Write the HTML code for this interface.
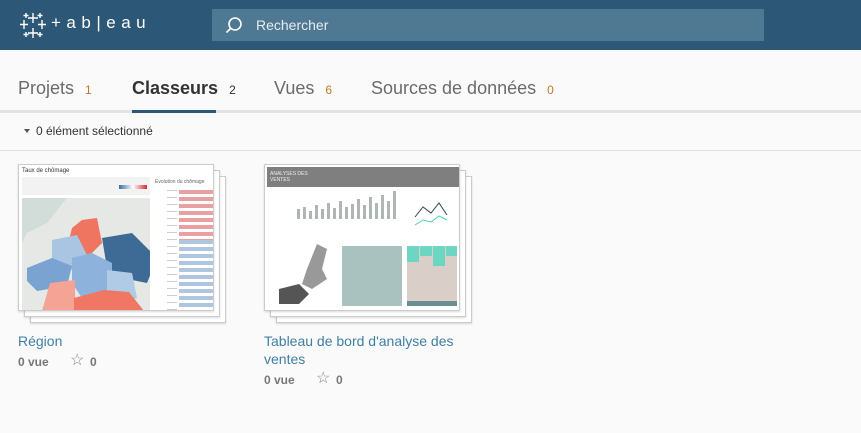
<!DOCTYPE html>
<html><head><meta charset="utf-8"><style>
*{margin:0;padding:0;box-sizing:border-box}
body{width:861px;height:433px;background:#fafafa;font-family:"Liberation Sans",sans-serif;position:relative;overflow:hidden}
.a{position:absolute}
.hdr{left:0;top:0;width:861px;height:50px;background:#2c5777}
.search{left:212px;top:9px;width:552px;height:32px;background:#4f7893}
.tab{top:78px;font-size:18px;color:#6b6b6b}
.cnt{font-size:12px;color:#c07a2e;margin-left:11px}
.card{background:#fff;border:1px solid #ccc;box-shadow:0 1px 2px rgba(0,0,0,.15)}
.title{font-size:14px;color:#3f7fa5;line-height:18px}
.meta{font-size:12px;color:#777;font-weight:bold}
</style></head><body>
<div class="a hdr"></div>
<svg class="a" style="left:18px;top:10px" width="30" height="30" viewBox="0 0 30 30" stroke="#fff" stroke-width="1.4" fill="none">
<path d="M15 3v10M10 8h10M15 18v10M10 23h10M6 10v9M2 14.5h8M24 10v9M20 14.5h8M8 3v5M5.5 5.5h5M22 3v5M19.5 5.5h5M8 22v5M5.5 24.5h5M22 22v5M19.5 24.5h5"/></svg>
<div class="a" style="left:51px;top:13px;color:#fff;font-size:17px;letter-spacing:5.5px">+ab|eau</div>
<div class="a search"></div>
<svg class="a" style="left:225px;top:16px" width="18" height="18" viewBox="0 0 18 18" fill="none" stroke="#fff" stroke-width="1.6"><circle cx="10" cy="8" r="6"/><path d="M6 12l-4.5 4.5"/></svg>
<div class="a" style="left:256px;top:17px;color:#e6edf2;font-size:14px">Rechercher</div>

<div class="a tab" style="left:18px">Projets<span class="cnt">1</span></div>
<div class="a tab" style="left:132px;color:#333;font-weight:bold">Classeurs<span class="cnt" style="color:#333;font-weight:normal">2</span></div>
<div class="a tab" style="left:274px">Vues<span class="cnt">6</span></div>
<div class="a tab" style="left:371px">Sources de données<span class="cnt">0</span></div>
<div class="a" style="left:0;top:110px;width:861px;height:3px;background:#e3e3e3"></div>
<div class="a" style="left:132px;top:110px;width:84px;height:3px;background:#2c5777"></div>
<div class="a" style="left:24px;top:129px;width:0;height:0;border-left:3px solid transparent;border-right:3px solid transparent;border-top:4px solid #555"></div>
<div class="a" style="left:36px;top:124px;font-size:12px;color:#333">0 élément sélectionné</div>
<div class="a" style="left:0;top:150px;width:861px;height:1px;background:#e3e3e3"></div>

<!-- card 1 -->
<div class="a card" style="left:30px;top:176px;width:196px;height:147px"></div>
<div class="a card" style="left:24px;top:170px;width:196px;height:147px"></div>
<div class="a card" style="left:18px;top:164px;width:196px;height:147px;overflow:hidden">
 <div class="a" style="left:3px;top:3px;font-size:6px;color:#333">Taux de chômage</div>
 <div class="a" style="left:3px;top:12px;width:128px;height:18px;background:#f2f2f2"></div>
 <div class="a" style="left:100px;top:20px;width:28px;height:4px;background:linear-gradient(90deg,#3a6ea5,#fff,#d1283a)"></div>
 <div class="a" style="left:3px;top:33px;width:128px;height:113px;background:#e6e8e6"></div>
 <svg class="a" style="left:3px;top:33px" width="128" height="113" viewBox="0 0 128 113">
  <path d="M0 0H45L25 25L5 35L0 45Z" fill="#d2ddd9"/>
  <path d="M60 22l15 -2 5 25 -15 15 -20 -10 5 -20z" fill="#f07560"/>
  <path d="M80 40l30 -5 25 25 -10 25 -25 -5 -15 -10z" fill="#3e6a96"/>
  <path d="M30 42l25 -5 10 20 -15 15 -20 -10z" fill="#a9c5e2"/>
  <path d="M5 70l25 -10 20 8 -5 20 -30 5 -10 -10z" fill="#7aa3d1"/>
  <path d="M50 60l20 -5 20 10 0 30 -30 5 -10 -15z" fill="#8db3dc"/>
  <path d="M85 72l25 3 5 25 -25 10 -5 -15z" fill="#b0cbe6"/>
  <path d="M28 85l25 -3 0 31 -33 0z" fill="#f4a394"/>
  <path d="M52 100l30 -8 25 2 15 19 -70 0z" fill="#ef7763"/>
 </svg>
 <div class="a" style="left:136px;top:14px;font-size:5px;color:#666">Évolution du chômage</div>
 <div class="a" style="left:148px;top:25px;width:10px;height:120px;background:repeating-linear-gradient(180deg,#ccc 0 1px,transparent 1px 7px)"></div>
 <div class="a" style="left:160px;top:25px;width:34px;height:50px;background:repeating-linear-gradient(180deg,#e8a0a0 0 4px,#fff 4px 7px)"></div>
 <div class="a" style="left:160px;top:75px;width:34px;height:70px;background:repeating-linear-gradient(180deg,#aec6df 0 4px,#fff 4px 7px)"></div>
</div>
<div class="a title" style="left:18px;top:332px">Région</div>
<div class="a meta" style="left:18px;top:355px">0 vue</div>
<div class="a" style="left:70px;top:350px;font-size:16px;color:#888">☆</div>
<div class="a meta" style="left:90px;top:355px">0</div>

<!-- card 2 -->
<div class="a card" style="left:276px;top:176px;width:196px;height:147px"></div>
<div class="a card" style="left:270px;top:170px;width:196px;height:147px"></div>
<div class="a card" style="left:264px;top:164px;width:196px;height:147px;overflow:hidden">
 <div class="a" style="left:2px;top:2px;width:192px;height:20px;background:#7f7f7f"></div>
 <div class="a" style="left:5px;top:6px;font-size:5px;color:#eee">ANALYSES DES<br>VENTES</div>
 <svg class="a" style="left:2px;top:24px" width="192" height="120" viewBox="0 0 192 120">
  <g fill="#b0b6b6"><rect x="30" y="20" width="3" height="10"/><rect x="36" y="18" width="3" height="12"/><rect x="42" y="22" width="3" height="8"/><rect x="48" y="16" width="3" height="14"/><rect x="54" y="20" width="3" height="10"/><rect x="60" y="14" width="3" height="16"/><rect x="66" y="19" width="3" height="11"/><rect x="72" y="12" width="3" height="18"/><rect x="78" y="18" width="3" height="12"/><rect x="84" y="15" width="3" height="15"/><rect x="90" y="10" width="3" height="20"/><rect x="96" y="16" width="3" height="14"/><rect x="102" y="8" width="3" height="22"/><rect x="108" y="14" width="3" height="16"/><rect x="114" y="6" width="3" height="24"/><rect x="120" y="12" width="3" height="18"/><rect x="126" y="2" width="3" height="28"/></g>
  <path d="M148 28l8-10 8 6 8-10 8 12" stroke="#2d4a55" fill="none"/>
  <path d="M148 36l8-5 8 2 8-6 8 4" stroke="#4bd1b5" fill="none"/>
  <path d="M40 80l10-25 10 5 -5 20 5 10 -15 10 -10 -5z" fill="#999"/>
  <path d="M12 100l20 -5 10 10 -10 10 -20 0z" fill="#555"/>
  <rect x="75" y="57" width="60" height="60" fill="#a9c2bf"/>
  <rect x="140" y="57" width="50" height="60" fill="#d9cfc8"/>
  <rect x="140" y="57" width="12" height="16" fill="#6cd6c2"/><rect x="153" y="57" width="12" height="10" fill="#6cd6c2"/><rect x="166" y="57" width="12" height="20" fill="#6cd6c2"/><rect x="179" y="57" width="11" height="10" fill="#6cd6c2"/>
  <rect x="140" y="112" width="50" height="5" fill="#6b8f90"/>
 </svg>
</div>
<div class="a title" style="left:264px;top:332px">Tableau de bord d'analyse des<br>ventes</div>
<div class="a meta" style="left:264px;top:373px">0 vue</div>
<div class="a" style="left:316px;top:368px;font-size:16px;color:#888">☆</div>
<div class="a meta" style="left:336px;top:373px">0</div>
</body></html>
